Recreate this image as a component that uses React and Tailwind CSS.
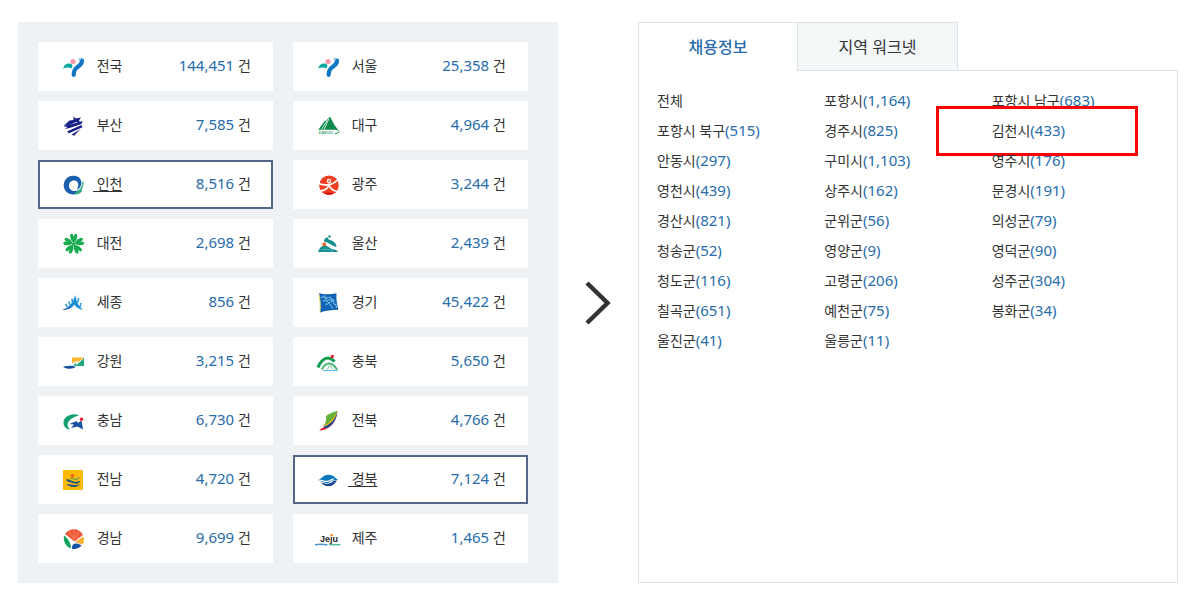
import { useState } from 'react'

const logos = {
  seoul: (
    <>
      <path d="M2 14.500c1.500-4.500 6-6.500 9.500-3.500l-1 3.500c-3-1.500-5-1-8.500 0z" fill="#00a7a0" />
      <circle cx="12" cy="7.500" r="2.600" fill="#f799a8" />
      <path d="M21 6.500c0 3.500-2 5-4.500 6.500S12.800 17 12.700 20.800" fill="none" stroke="#0f76c4" strokeWidth="4.200" strokeLinecap="round" />
      <path d="M17 4.500l4-1-2 3.500z" fill="#8cc4ea" />
    </>
  ),
  busan: (
    <g fill="#151d86">
      <path d="M12.500 3.300l2 2.200 5.500-1-2 3 1.500 2.500-4.500-1-7 3.200L2.700 13 8.500 7.500l4-.5z" />
      <path d="M2.500 13.300l8-2 11-3.300-1 3-12 4-5 1 3-2z" />
      <path d="M6 18.500l14.500-6.500 1 2.200-13.500 6z" />
      <path d="M10.500 21.500l9-5.200-6.500 6.400z" />
    </g>
  ),
  incheon: (
    <>
      <path
        d="M17.500 5C9 1 2.500 7 2.700 13.500c.3 7 6.300 10 12.300 8.500l2-3.500c-5 1.500-9-.5-9-5 0-5 6.500-6.500 8.700-3 1.200 2.200.5 5-1 7.500 6-3 6-9.500 1.800-13z"
        fill="#1b5fae"
      />
      <path d="M22 9.500c.5 6-2.500 9-7.500 11.500M21.500 14c-1 4-3.500 6.500-7.500 7.500M21 18c-1.500 2.500-4 4-6.500 4" fill="none" stroke="#36aa87" strokeWidth="1.300" />
    </>
  ),
  daejeon: (
    <g fill="#18ac50">
      {[0, 72, 144, 216, 288].map((a) => (
        <path
          key={a}
          transform={`rotate(${a} 12.700 13)`}
          d="M12.700 12.500L9.800 8.500 9 4.500l1-1.700 1.700.2 1 2.700 1-2.700 1.700-.2 1 1.700-.8 4z"
        />
      ))}
      <circle cx="12.700" cy="13" r="1.500" />
    </g>
  ),
  sejong: (
    <>
      <path d="M14 5l1 3c.5 4.500 3 8.500 7 12-4.500-1-7.500-3-8.500-5.500-2 3-6.500 5.500-11.500 5.200 5-1.700 10.500-6.200 12-14.700z" fill="#138bd1" />
      <path d="M11 8.500l.5 4.500M8 11.500l1 4M4.500 14l2 3M17.500 8l-.5 4.500M20 13l-1 4" stroke="#3d9fd8" strokeWidth="1.700" />
      <path d="M1.300 19c4 0 6.500-1 9-3-1.500 3-5 4.500-9 3z" fill="#284e8d" />
    </>
  ),
  gangwon: (
    <>
      <path d="M11 8.500h12l-9 7-3-2z" fill="#fab52a" />
      <path d="M23 9v8h-8.500z" fill="#25aa7b" />
      <path d="M12 13.500l5-2-2.500 5.500H8z" fill="#f1f6f3" />
      <path d="M12 16.500l3-2.500.5 3z" fill="#25aa7b" />
      <path d="M2 18c4-1.500 9-1.500 13-.2-3 2.500-9 2.700-13 .2z" fill="#174f9e" />
    </>
  ),
  chungnam: (
    <>
      <path d="M18 7.500C11 4 2 9 2.500 15c.2 4 3.500 6.300 6.500 6.500-4.500-4-3-11 9-14z" fill="#12a071" />
      <path d="M8.500 16l7-3 1.500 2 3.500-2.500 1.500 9-5.500-3-6.500 1.500 3-3.500z" fill="#174fa1" />
      <circle cx="20.500" cy="11.200" r="1.700" fill="#ee1c2e" />
    </>
  ),
  jeonnam: (
    <>
      <path d="M2 3h20v20H2z" fill="#fdba08" />
      <circle cx="11.500" cy="8.800" r="1.800" fill="#ef6223" />
      <path d="M18.500 10.500l-3.500 2-6-1.500" fill="none" stroke="#5a9c57" strokeWidth="1.200" />
      <path d="M5 12.500c3-1 5 1.500 8 2.200 2.500.5 4-1 6.500-.7-2 3.500-5 3-8 2-2.500-.8-5-.5-6.500-3.500z" fill="#1e577d" />
      <path d="M5.500 17.500c4-1.300 7 1.500 13.500 0-4 3.500-9.500 3.200-13.500 0z" fill="#1e4f8d" />
    </>
  ),
  gyeongnam: (
    <>
      <path d="M4 8C8 1.500 18.500 1.500 22 9l-8.500 6.500z" fill="#ee5a3a" />
      <path d="M8 5l5 8M13 3.500V13M18 5l-4 8" stroke="#ff8e68" strokeWidth=".7" />
      <path d="M3 9.500c4.500 3.500 7 8 7 13C4.500 20.500 2 15 3 9.500z" fill="#0fa45c" />
      <path d="M14 16l8.500-5.500c1 2.500.5 5.500-1 8z" fill="#fcb030" />
      <path d="M11 22.700c-.5-5.500 4-6.500 9.500-3.200-2.500 3-6 4-9.500 3.200z" fill="#1555a4" />
    </>
  ),
  daegu: (
    <>
      <path d="M2.300 16.700L9 7.500l1 .5 4-4.500 4.500 8.500 4.700 6.500-3-1.800z" fill="#0d8b4c" />
      <path d="M5.500 16.500l5.500-9M8 16.500l5-11" stroke="#fff" strokeWidth=".8" />
      <text x="2.500" y="21" fontSize="4" fontWeight="700" fontFamily="Liberation Sans, sans-serif" fill="#4aa878">
        DAEGU
      </text>
      <path d="M19 20.500c2.500.2 4-.7 4.200-2" stroke="#0d8b4c" fill="none" />
    </>
  ),
  gwangju: (
    <>
      <circle cx="13" cy="13.300" r="9.800" fill="#ee4023" />
      <circle cx="13" cy="9" r="2.200" fill="#fff" />
      <circle cx="13" cy="9" r="1.200" fill="#f4826f" />
      <path d="M2.500 11.500c7 2.500 14 2 19.500-4M4 19c5-.5 8-3 9-6 1 3 4 5.500 8 6.500" fill="none" stroke="#fff" strokeWidth="1.700" />
      <path d="M8 20.800h10l-2.500 1.700h-5z" fill="#d3000e" />
    </>
  ),
  ulsan: (
    <>
      <circle cx="13.500" cy="5.500" r="1.200" fill="#168f91" />
      <path d="M8 10.500c0-2.500 1.500-4 4-4.200l.5 2.200c4.500 1 8 3.500 8 7.500-4-1-7-4-12.500-5.500z" fill="#168f91" />
      <path d="M2 20.900c1.500-4.700 4-6.900 7-6.400 3 .4 4 2.500 7 3.500 2.500.7 4.500.5 6 2.900z" fill="#168f91" />
      <path d="M5 19.500c4-2 8-1 12 .3" stroke="#73c0bf" fill="none" strokeWidth=".7" />
      <circle cx="8.300" cy="13.300" r="1.900" fill="#ee5a24" />
    </>
  ),
  gyeonggi: (
    <>
      <path d="M3 3.300c5.500 1.200 11 1.200 17.500 0-.5 6 .5 11.500 2 16.500-6.500 0-13 1-18.500 2.700C5 17 4.500 9 3 3.300z" fill="#1264b2" />
      <path
        d="M5 8c3-3 5 1 8-.5s1 3 4 3-1 3 2 4 0 2 2 3M8 5.500c2 2.500 1 4.500 4 6.500s2 4 5 6M7 11c3-1 4 1 7-2M10 15c2-3 5-1 7-6"
        fill="none"
        stroke="#7fc8f1"
        strokeWidth="1.300"
        strokeDasharray="2 .7"
      />
      <path d="M3 4c1 6 1.700 13 1 18.500" stroke="#d4ca4b" strokeWidth=".8" fill="none" />
    </>
  ),
  chungbuk: (
    <>
      <path d="M2 18.500C4 12.500 8.500 8.500 13 9.200c3 .5 4 1.500 5.500 3.300" fill="none" stroke="#109d52" strokeWidth="3" />
      <path d="M6 20.500c1.500-4 5-6.500 8-6 3 .3 5 3 7 6" fill="none" stroke="#45b36b" strokeWidth="2" />
      <path d="M11 20.500l3-4 3 4" fill="none" stroke="#75c58a" />
      <circle cx="16.300" cy="7.500" r="1.700" fill="#ed1c2e" />
      <path d="M7 21.500h15" stroke="#57b7e8" />
    </>
  ),
  jeonbuk: (
    <>
      <path d="M21.300 3C21 12 15.500 22 3.300 22.500c1-1.500 2.500-2.500 4-3z" fill="#e11d39" />
      <path d="M21.300 3C21 11 16.500 18.500 9 20.500l-1.500-2z" fill="#144e9a" />
      <path d="M21.300 3C20 10.500 15 16.500 7 19z" fill="#fbb216" />
      <path d="M21.300 3C16 4.500 12.500 5.500 10 8c.5 3.500 0 7-2.500 9.500 6-2 11-7.500 13.800-14.500z" fill="#66b437" />
    </>
  ),
  gyeongbuk: (
    <>
      <path d="M5 11.500c3.500-5 11-5 14.500-.5L22 13l-6 .5-4 2.500c-3 .3-6-.8-10-3z" fill="#0877bb" />
      <path d="M5 15.500c3 1.500 7 1.500 10 .2l3-2 3-.2c-4 7.300-12 7.500-16 2z" fill="#174692" />
      <path d="M2.500 13c4 .3 6 1.800 9 1.300 2.500-.5 3.500-2.300 6.500-2.300" stroke="#fff" strokeWidth="1.200" fill="none" />
    </>
  ),
  jeju: (
    <>
      <text x="4" y="16" fontSize="9" fontWeight="700" fontFamily="Liberation Sans, sans-serif" fill="#26272b">
        Jeju
      </text>
      <circle cx="15.700" cy="9" r="1.300" fill="#f29639" />
      <path d="M-1 19c4-1.500 8-.5 12.500-.3" stroke="#5194cb" strokeWidth="1.500" fill="none" />
      <path d="M13 18.700h11.500" stroke="#55b994" strokeWidth="1.500" />
    </>
  ),
}

const regions = [
  { name: '전국', count: '144,451', logo: 'seoul' },
  { name: '서울', count: '25,358', logo: 'seoul' },
  { name: '부산', count: '7,585', logo: 'busan' },
  { name: '대구', count: '4,964', logo: 'daegu' },
  { name: '인천', count: '8,516', logo: 'incheon', active: true },
  { name: '광주', count: '3,244', logo: 'gwangju' },
  { name: '대전', count: '2,698', logo: 'daejeon' },
  { name: '울산', count: '2,439', logo: 'ulsan' },
  { name: '세종', count: '856', logo: 'sejong' },
  { name: '경기', count: '45,422', logo: 'gyeonggi' },
  { name: '강원', count: '3,215', logo: 'gangwon' },
  { name: '충북', count: '5,650', logo: 'chungbuk' },
  { name: '충남', count: '6,730', logo: 'chungnam' },
  { name: '전북', count: '4,766', logo: 'jeonbuk' },
  { name: '전남', count: '4,720', logo: 'jeonnam' },
  { name: '경북', count: '7,124', logo: 'gyeongbuk', active: true },
  { name: '경남', count: '9,699', logo: 'gyeongnam' },
  { name: '제주', count: '1,465', logo: 'jeju' },
]

const cities = [
  { name: '전체' },
  { name: '포항시', count: '1,164' },
  { name: '포항시 남구', count: '683' },
  { name: '포항시 북구', count: '515' },
  { name: '경주시', count: '825' },
  { name: '김천시', count: '433', marked: true },
  { name: '안동시', count: '297' },
  { name: '구미시', count: '1,103' },
  { name: '영주시', count: '176' },
  { name: '영천시', count: '439' },
  { name: '상주시', count: '162' },
  { name: '문경시', count: '191' },
  { name: '경산시', count: '821' },
  { name: '군위군', count: '56' },
  { name: '의성군', count: '79' },
  { name: '청송군', count: '52' },
  { name: '영양군', count: '9' },
  { name: '영덕군', count: '90' },
  { name: '청도군', count: '116' },
  { name: '고령군', count: '206' },
  { name: '성주군', count: '304' },
  { name: '칠곡군', count: '651' },
  { name: '예천군', count: '75' },
  { name: '봉화군', count: '34' },
  { name: '울진군', count: '41' },
  { name: '울릉군', count: '11' },
]

function RegionCard({ region }) {
  return (
    <li
      className={`flex h-[49px] items-center border-2 bg-white pr-5 pl-[21px] ${
        region.active ? 'border-[#53658a]' : 'border-white'
      }`}
    >
      <svg viewBox="0 0 26 25" className="h-[25px] w-[26px] shrink-0 overflow-visible" aria-hidden="true">
        {logos[region.logo]}
      </svg>
      <a
        href="#"
        className={`ml-[6px] pb-0.5 whitespace-pre ${region.active ? 'underline underline-offset-2' : ''}`}
      >
        {' ' + region.name}
      </a>
      <span className="ml-auto pb-0.5 text-[15px]">
        <span className="text-[#276cab]">{region.count}</span> <span className="text-[14px]">건</span>
      </span>
    </li>
  )
}

export default function App() {
  const [tab, setTab] = useState('jobs')

  const tabColor = (name) =>
    tab === name
      ? 'border-b-white bg-white font-medium text-[#276cab]'
      : 'border-b-[#dae3ea] bg-[#f3f7f8] text-[#333]'

  return (
    <main className="grid grid-cols-[1fr_80px_1fr] bg-white pt-[22px] pr-[13px] pl-[18px] font-['Noto_Sans','Noto_Sans_CJK_KR',sans-serif] text-[14px] leading-5 text-[#333]">
      <ul className="grid grid-cols-2 gap-x-5 gap-y-[10px] bg-[#eef2f5] py-5 pr-[30px] pl-5">
        {regions.map((region) => (
          <RegionCard key={region.name} region={region} />
        ))}
      </ul>

      <div className="flex items-center justify-center">
        <svg viewBox="0 0 26 44" className="h-[44px] w-[26px]" aria-hidden="true">
          <path d="M2 2l20.500 20L2 42" fill="none" stroke="#333" strokeWidth="4.500" />
        </svg>
      </div>

      <section className="flex flex-col">
        <div className="flex h-[49px] text-[16px]">
          <button
            type="button"
            onClick={() => setTab('jobs')}
            className={`w-[159px] border-t border-b border-l border-t-[#dae3ea] border-l-[#dae3ea] ${tabColor('jobs')}`}
          >
            채용정보
          </button>
          <button
            type="button"
            onClick={() => setTab('worknet')}
            className={`w-[161px] border border-t-[#dae3ea] border-r-[#dae3ea] border-l-[#dae3ea] ${tabColor('worknet')}`}
          >
            지역 워크넷
          </button>
          <div className="flex-1 border-b border-[#dae3ea]"></div>
        </div>
        <div className="flex-1 border-r border-b border-l border-[#dae3ea] px-[18px] pt-[14px]">
          <ul className="grid grid-cols-3 text-[15px]">
            {cities.map((city) => (
              <li key={city.name} className="relative h-[30px] leading-[30px]">
                <a href="#">
                  <span className="text-[14px]">{city.name}</span>
                  {city.count && <span className="text-[#276cab]">({city.count})</span>}
                </a>
                {city.marked && (
                  <span className="pointer-events-none absolute top-[-9px] left-[-56px] h-[50px] w-[202px] border-3 border-[#f00]"></span>
                )}
              </li>
            ))}
          </ul>
        </div>
      </section>
    </main>
  )
}
